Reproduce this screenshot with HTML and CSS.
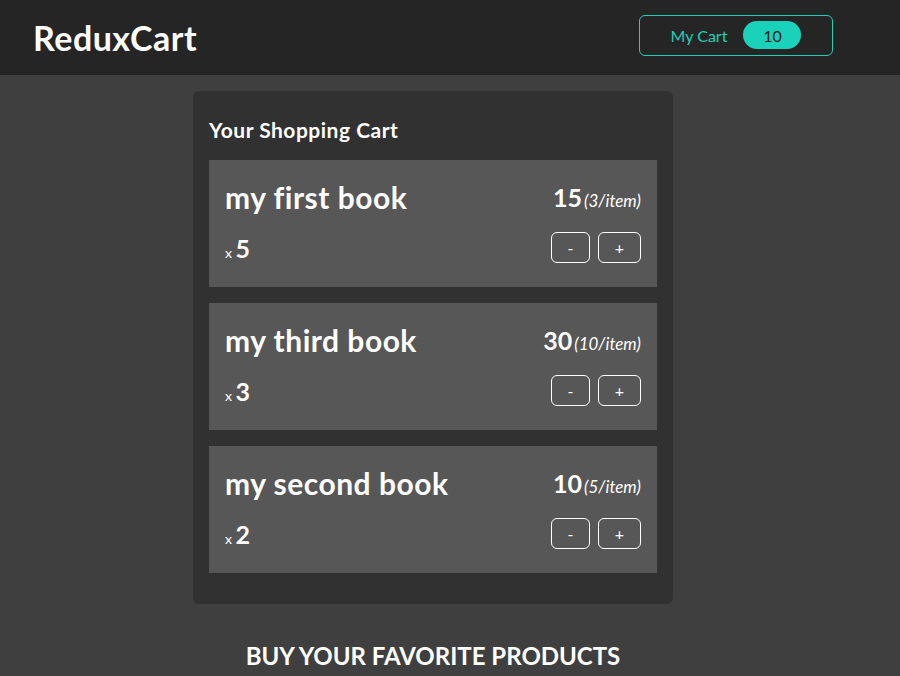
FILE: index.html
```html
<!DOCTYPE html>
<html lang="en">
<head>
<meta charset="utf-8">
<title>ReduxCart</title>
<link rel="stylesheet" href="styles.css">
</head>
<body>
<header class="header">
  <h1 class="logo">ReduxCart</h1>
  <nav class="nav">
    <button class="cart-button">
      <span>My Cart</span>
      <span class="badge">10</span>
    </button>
  </nav>
</header>
<main class="main">
  <section class="cart">
    <h2 class="cart-title">Your Shopping Cart</h2>
    <ul class="items">
      <li class="item">
        <div class="item-head">
          <h3 class="item-title">my first book</h3>
          <div class="price">15<span class="price-each">(3/item)</span></div>
        </div>
        <div class="item-details">
          <div class="quantity">x <span class="qty">5</span></div>
          <div class="actions">
            <button class="act">-</button>
            <button class="act act-plus">+</button>
          </div>
        </div>
      </li>
      <li class="item">
        <div class="item-head">
          <h3 class="item-title">my third book</h3>
          <div class="price">30<span class="price-each">(10/item)</span></div>
        </div>
        <div class="item-details">
          <div class="quantity">x <span class="qty">3</span></div>
          <div class="actions">
            <button class="act">-</button>
            <button class="act act-plus">+</button>
          </div>
        </div>
      </li>
      <li class="item">
        <div class="item-head">
          <h3 class="item-title">my second book</h3>
          <div class="price">10<span class="price-each">(5/item)</span></div>
        </div>
        <div class="item-details">
          <div class="quantity">x <span class="qty">2</span></div>
          <div class="actions">
            <button class="act">-</button>
            <button class="act act-plus">+</button>
          </div>
        </div>
      </li>
    </ul>
  </section>
  <h2 class="products-title">BUY YOUR FAVORITE PRODUCTS</h2>
</main>
</body>
</html>
```
FILE: styles.css
```css
* { box-sizing: border-box; }
html, body { margin: 0; padding: 0; }
body {
  background: #3f3f3f;
  font-family: "Source Sans Pro", Lato, "Open Sans", sans-serif;
  color: #ffffff;
}
.header {
  height: 75px;
  background: #252525;
  display: flex;
  align-items: center;
  justify-content: space-between;
  padding: 0 67px 0 33px;
}
.logo {
  margin: 0;
  font-size: 34px;
  letter-spacing: 0.5px;
  font-weight: 700;
  line-height: 1;
}
.nav {
  margin-bottom: 5px;
}
.cart-button {
  width: 194px;
  height: 41px;
  border: 1px solid #1ad1b9;
  border-radius: 6px;
  background: transparent;
  color: #1ad1b9;
  font: inherit;
  font-size: 16px;
  display: flex;
  align-items: center;
  justify-content: center;
  gap: 16px;
  padding: 0;
}
.badge {
  background: #1ad1b9;
  color: #1d1d1d;
  width: 58px;
  height: 28px;
  border-radius: 30px;
  display: flex;
  align-items: center;
  justify-content: center;
  font-size: 16px;
}
.main {
  display: flex;
  flex-direction: column;
  align-items: center;
  padding: 16px 34px 0 0;
}
.cart {
  width: 480px;
  background: #313131;
  border-radius: 6px;
  padding: 16px 16px 31px;
}
.cart-title {
  margin: 8px 0 15px;
  font-size: 21px;
  letter-spacing: 0.5px;
  line-height: 30px;
  font-weight: 700;
}
.items {
  list-style: none;
  margin: 0;
  padding: 0;
  display: flex;
  flex-direction: column;
  gap: 16px;
}
.item {
  background: #575757;
  padding: 16px 16px 24px;
  display: flex;
  flex-direction: column;
  gap: 14px;
}
.item-head {
  display: flex;
  justify-content: space-between;
  align-items: center;
  height: 42px;
}
.item-title {
  margin: 0;
  font-size: 30px;
  letter-spacing: 0.5px;
  font-weight: 700;
  line-height: 42px;
}
.price {
  font-size: 25px;
  font-weight: 700;
}
.price-each {
  font-size: 17px;
  font-weight: 400;
  font-style: italic;
  margin-left: 2px;
}
.item-details {
  display: flex;
  justify-content: space-between;
  align-items: center;
}
.quantity {
  font-size: 14px;
}
.qty {
  font-size: 25px;
  font-weight: 700;
}
.actions {
  display: flex;
  gap: 8px;
}
.act {
  width: 39px;
  height: 31px;
  background: transparent;
  border: 1px solid #ffffff;
  border-radius: 6px;
  color: #ffffff;
  font: inherit;
  font-size: 16px;
  padding: 0;
}
.act-plus { width: 43px; }
.products-title {
  margin: 37px 0 0;
  font-size: 24px;
  line-height: 30px;
  font-weight: 700;
}
```
